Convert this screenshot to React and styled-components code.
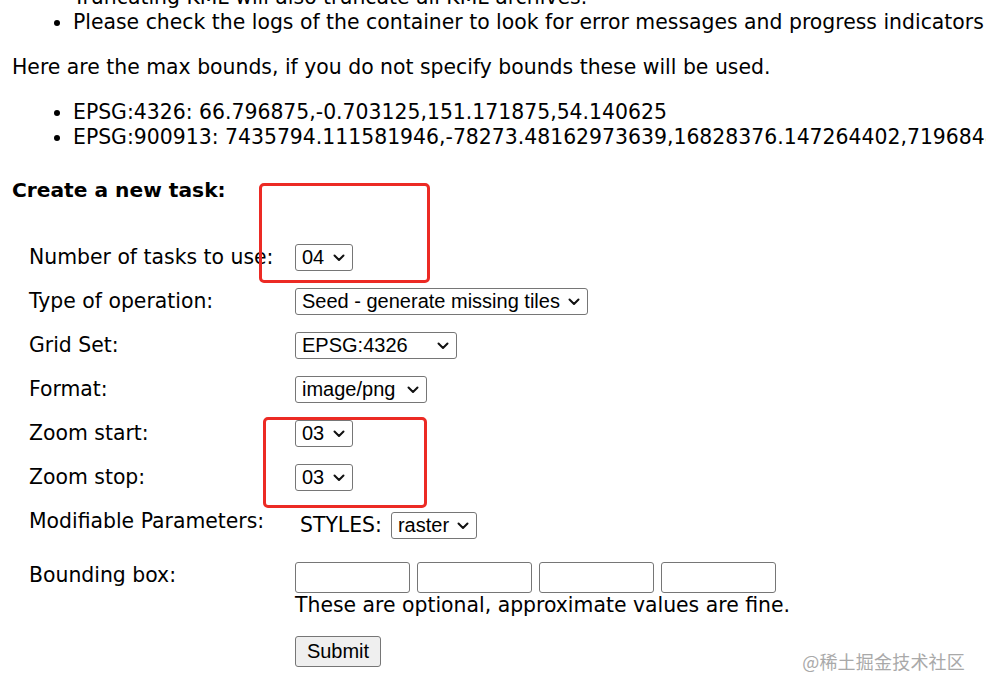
import styled, { createGlobalStyle } from 'styled-components';

const GlobalStyle = createGlobalStyle`
  html, body {
    margin: 0;
    padding: 0;
    background: #fff;
    overflow: hidden;
  }
  body {
    font-family: "DejaVu Sans", Verdana, sans-serif;
    color: #000;
  }
`;

const taskRows = [
  { label: 'Number of tasks to use:', name: 'threads', width: 58, value: '04', options: ['01', '02', '03', '04', '05', '06', '07', '08'] },
  { label: 'Type of operation:', name: 'type', width: 293, value: 'Seed - generate missing tiles', options: ['Reseed - regenerate all tiles', 'Seed - generate missing tiles', 'Truncate - remove tiles'] },
  { label: 'Grid Set:', name: 'gridSetId', width: 162, value: 'EPSG:4326', options: ['EPSG:4326', 'EPSG:900913'] },
  { label: 'Format:', name: 'format', width: 132, value: 'image/png', options: ['image/png', 'image/jpeg'] },
  { label: 'Zoom start:', name: 'zoomStart', width: 58, value: '03', options: ['00', '01', '02', '03', '04', '05', '06'] },
  { label: 'Zoom stop:', name: 'zoomStop', width: 58, value: '03', options: ['00', '01', '02', '03', '04', '05', '06'] },
];

const Chevron = () => (
  <ChevronIcon width="12" height="8" viewBox="0 0 12 8">
    <path d="M1.5 1.5 L6 6 L10.5 1.5" fill="none" stroke="#111" strokeWidth="2" strokeLinecap="round" strokeLinejoin="round" />
  </ChevronIcon>
);

const Dropdown = ({ name, width, value, options }) => (
  <SelectWrap>
    <Select name={name} defaultValue={value} width={width}>
      { options.map(o => <option key={o} value={o}>{o}</option>) }
    </Select>
    <Chevron />
  </SelectWrap>
);

const App = () => {
  return (
    <Screen>
      <GlobalStyle />
      <Page>
        <BulletList>
          <ContinuationLine>Truncating KML will also truncate all KML archives.</ContinuationLine>
          <li>Please check the logs of the container to look for error messages and progress indicators</li>
        </BulletList>

        <Paragraph>Here are the max bounds, if you do not specify bounds these will be used.</Paragraph>

        <BoundsList>
          <li>EPSG:4326: 66.796875,-0.703125,151.171875,54.140625</li>
          <li>EPSG:900913: 7435794.111581946,-78273.48162973639,16828376.147264402,7196848.056175977</li>
        </BoundsList>

        <Heading>Create a new task:</Heading>

        <TaskForm onSubmit={e => e.preventDefault()}>
          { taskRows.map(row => (
            <SelectRow key={row.name}>
              <Label>{ row.label }</Label>
              <div>
                <Dropdown {...row} />
              </div>
            </SelectRow>
          )) }

          <ParamRow>
            <Label>Modifiable Parameters:</Label>
            <ParamCell>
              <ParamName>STYLES:</ParamName>
              <Dropdown name="STYLES" width={86} value="raster" options={['raster', 'population']} />
            </ParamCell>
          </ParamRow>

          <BoundsRow>
            <Label>Bounding box:</Label>
            <div>
              <BoxInputs>
                <BoxInput name="minX" />
                <BoxInput name="minY" />
                <BoxInput name="maxX" />
                <BoxInput name="maxY" />
              </BoxInputs>
              <Hint>These are optional, approximate values are fine.</Hint>
              <SubmitButton type="submit">Submit</SubmitButton>
            </div>
          </BoundsRow>
        </TaskForm>
      </Page>

      <Highlight top={183} left={259} w={171} h={100} />
      <Highlight top={417} left={263} w={164} h={91} />
      <Watermark>@稀土掘金技术社区</Watermark>
    </Screen>
  );
}

const Screen = styled.div`
  position: relative;
  width: 986px;
  height: 692px;
  overflow: hidden;
`;

const Page = styled.div`
  margin-top: -15px;
  padding: 0 12px;
  font-size: 20.4px;
  line-height: 25px;
  white-space: nowrap;
`;

const BulletList = styled.ul`
  margin: 0;
  padding-left: 61px;
`;

const ContinuationLine = styled.li`
  list-style: none;
`;

const Paragraph = styled.p`
  margin: 20px 0 0;
`;

const BoundsList = styled.ul`
  margin: 20px 0 0;
  padding-left: 61px;
`;

const Heading = styled.h4`
  margin: 28px 0 32px;
  font-size: 20.2px;
  font-weight: 700;
`;

const TaskForm = styled.form`
  margin-left: 17px;
  display: flex;
  flex-direction: column;
`;

const SelectRow = styled.div`
  display: grid;
  grid-template-columns: 266px 1fr;
  align-items: center;
  height: 44px;
`;

const ParamRow = styled.div`
  display: grid;
  grid-template-columns: 266px 1fr;
  align-items: start;
  height: 61px;
`;

const BoundsRow = styled.div`
  display: grid;
  grid-template-columns: 266px 1fr;
  align-items: start;
`;

const Label = styled.span`
  display: block;
  ${ParamRow} & {
    padding-top: 10px;
  }
  ${BoundsRow} & {
    padding-top: 3px;
  }
`;

const ParamCell = styled.div`
  display: flex;
  align-items: center;
  padding-top: 13px;
  padding-left: 5px;
`;

const ParamName = styled.span`
  margin-right: 9px;
`;

const SelectWrap = styled.span`
  position: relative;
  display: inline-flex;
  vertical-align: middle;
`;

const Select = styled.select`
  appearance: none;
  -webkit-appearance: none;
  box-sizing: border-box;
  width: ${({ width }) => width}px;
  height: 27px;
  margin: 0;
  padding: 0 24px 0 6px;
  border: 1px solid #767676;
  border-radius: 3px;
  background: #fff;
  color: #000;
  font-family: "Liberation Sans", Arial, sans-serif;
  font-size: 20px;
  line-height: 25px;
`;

const ChevronIcon = styled.svg`
  position: absolute;
  right: 8px;
  top: 10px;
  pointer-events: none;
`;

const BoxInputs = styled.div`
  display: flex;
  gap: 7px;
  margin-top: 2px;
`;

const BoxInput = styled.input`
  box-sizing: border-box;
  width: 115px;
  height: 31px;
  margin: 0;
  border: 1px solid #767676;
  border-radius: 3px;
  background: #fff;
  font-family: "Liberation Sans", Arial, sans-serif;
  font-size: 20px;
`;

const Hint = styled.div`
  line-height: 25px;
`;

const SubmitButton = styled.button`
  display: block;
  box-sizing: border-box;
  width: 86px;
  height: 31px;
  margin-top: 18px;
  padding: 0;
  border: 1px solid #767676;
  border-radius: 3px;
  background: #efefef;
  color: #000;
  font-family: "Liberation Sans", Arial, sans-serif;
  font-size: 20px;
`;

const Highlight = styled.div`
  position: absolute;
  top: ${({ top }) => top}px;
  left: ${({ left }) => left}px;
  width: ${({ w }) => w}px;
  height: ${({ h }) => h}px;
  box-sizing: border-box;
  border: 3px solid #ec2a24;
  border-radius: 5px;
  pointer-events: none;
`;

const Watermark = styled.div`
  position: absolute;
  right: 21px;
  top: 650px;
  color: #a9a9a9;
  font-family: "Noto Sans CJK SC", sans-serif;
  font-size: 18px;
  line-height: 22px;
  letter-spacing: 0.2px;
`;

export default App;
